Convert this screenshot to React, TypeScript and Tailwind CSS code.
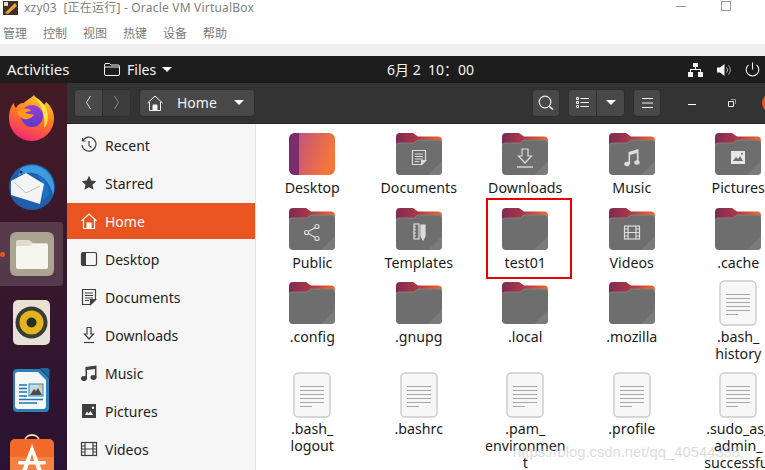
import React from "react";

const Folder = ({ children }: { children?: React.ReactNode }) => (
  <svg width="46" height="42" viewBox="0 0 46 42">
    <defs>
      <linearGradient id="folderBack" x1="0" y1="0" x2="1" y2="0">
        <stop offset="0" stopColor="#7f2a55" />
        <stop offset="0.5" stopColor="#b03a45" />
        <stop offset="1" stopColor="#f2682a" />
      </linearGradient>
    </defs>
    <path d="M0 4a4 4 0 0 1 4-4h13l5 3.500h20a4 4 0 0 1 4 4V20H0z" fill="url(#folderBack)" />
    <path d="M0 13a3 3 0 0 1 3-3h15l4-3h21a3 3 0 0 1 3 3v28a4 4 0 0 1-4 4H4a4 4 0 0 1-4-4z" fill="#6e6e6e" />
    <path d="M46 28v10a4 4 0 0 1-4 4H32z" fill="#7b7b7b" />
    <path d="M0 13a3 3 0 0 1 3-3h15l4-3h21a3 3 0 0 1 3 3" fill="none" stroke="#8d8d8d" strokeWidth="0.7" />
    {children}
  </svg>
);

const glyph = { fill: "none", stroke: "#dcdcdc", strokeWidth: 1.2 };

const GlyphDoc = () => (
  <g {...glyph}>
    <path d="M16.500 17.500h13v10l-4 4h-9z" />
    <path d="M19 21h8M19 23.500h8M19 26h8M19 28.500h4" />
    <path d="M29.500 27.500l-4 4v-4z" fill="#dcdcdc" />
  </g>
);
const GlyphDownload = () => (
  <g {...glyph}>
    <path d="M20 16h6v7h3.500L23 30l-6.500-7H20z" />
    <path d="M15 34h16" strokeWidth="1.400" />
  </g>
);
const GlyphMusic = () => (
  <g fill="#dcdcdc" stroke="none">
    <ellipse cx="18" cy="31" rx="2.700" ry="2.200" />
    <ellipse cx="28" cy="29.500" rx="2.700" ry="2.200" />
    <path d="M19.500 31V19l10-3v13.500h-1.600V20l-6.800 2v9z" />
  </g>
);
const GlyphPicture = () => (
  <g>
    <rect x="16" y="18" width="14" height="13" fill="#e6e6e6" />
    <path d="M18 28l3-4 2 2 2-3 3 5z" fill="#6e6e6e" />
    <circle cx="27" cy="20.800" r="1" fill="#6e6e6e" />
  </g>
);
const GlyphShare = () => (
  <g {...glyph}>
    <circle cx="17.500" cy="24.500" r="2" />
    <circle cx="28" cy="18.500" r="2" />
    <circle cx="28" cy="30.500" r="2" />
    <path d="M19.300 23.500l7-4M19.300 25.500l7 4" />
  </g>
);
const GlyphTemplates = () => (
  <g {...glyph}>
    <rect x="18" y="16" width="5" height="15" />
    <path d="M18 19h2M18 22h2M18 25h2M18 28h2" />
    <path d="M25 17h4v11l-2 4-2-4z" fill="#dcdcdc" />
  </g>
);
const GlyphVideo = () => (
  <g {...glyph}>
    <rect x="15.500" y="18" width="15" height="13" />
    <path d="M19 18v13M27 18v13M19 24.500h8M15.500 21h3.500M15.500 24.500h3.500M15.500 28h3.500M27 21h3.500M27 24.500h3.500M27 28h3.500" />
  </g>
);

const DesktopFolder = () => (
  <svg width="46" height="42" viewBox="0 0 46 42">
    <defs>
      <linearGradient id="desk" x1="0" y1="0" x2="1" y2="0.300">
        <stop offset="0" stopColor="#b84a8c" />
        <stop offset="1" stopColor="#f5763a" />
      </linearGradient>
    </defs>
    <rect width="46" height="42" rx="6" fill="url(#desk)" />
    <path d="M6 0h4v42H6a6 6 0 0 1-6-6V6a6 6 0 0 1 6-6z" fill="#7b2c6c" />
  </svg>
);

const FileDoc = () => (
  <svg width="38" height="46" viewBox="0 0 38 46">
    <rect x="1" y="1" width="36" height="44" rx="4.500" fill="#f7f7f7" stroke="#cbcbcb" strokeWidth="1.400" />
    <path d="M7 14.500h24M7 18.500h24M7 22.500h24M7 26.500h24M7 30.500h24M7 34.500h12" stroke="#a8a8a8" strokeWidth="1" />
  </svg>
);

type Item = { name: string; icon: React.ReactNode; boxed?: boolean };

const items: Item[] = [
  { name: "Desktop", icon: <DesktopFolder /> },
  { name: "Documents", icon: <Folder><GlyphDoc /></Folder> },
  { name: "Downloads", icon: <Folder><GlyphDownload /></Folder> },
  { name: "Music", icon: <Folder><GlyphMusic /></Folder> },
  { name: "Pictures", icon: <Folder><GlyphPicture /></Folder> },
  { name: "Public", icon: <Folder><GlyphShare /></Folder> },
  { name: "Templates", icon: <Folder><GlyphTemplates /></Folder> },
  { name: "test01", icon: <Folder />, boxed: true },
  { name: "Videos", icon: <Folder><GlyphVideo /></Folder> },
  { name: ".cache", icon: <Folder /> },
  { name: ".config", icon: <Folder /> },
  { name: ".gnupg", icon: <Folder /> },
  { name: ".local", icon: <Folder /> },
  { name: ".mozilla", icon: <Folder /> },
  { name: ".bash_\nhistory", icon: <FileDoc /> },
  { name: ".bash_\nlogout", icon: <FileDoc /> },
  { name: ".bashrc", icon: <FileDoc /> },
  { name: ".pam_\nenvironmen\nt", icon: <FileDoc /> },
  { name: ".profile", icon: <FileDoc /> },
  { name: ".sudo_as_\nadmin_\nsuccessful", icon: <FileDoc /> },
];

const side = { width: 18, height: 18, viewBox: "0 0 18 18", fill: "none", stroke: "currentColor", strokeWidth: 1.200 };

const places: { name: string; icon: React.ReactNode; active?: boolean }[] = [
  {
    name: "Recent",
    icon: (
      <svg {...side}>
        <path d="M3 4.500A7 7 0 1 1 2 9" />
        <path d="M2.500 2v3h3" />
        <path d="M9 5v4.500l2.500 2" />
      </svg>
    ),
  },
  {
    name: "Starred",
    icon: (
      <svg {...side} fill="currentColor" stroke="none">
        <path d="M9 1.800l2.200 4.800 5.100.6-3.800 3.500 1 5.100L9 13.300l-4.500 2.500 1-5.100L1.700 7.200l5.100-.6z" />
      </svg>
    ),
  },
  {
    name: "Home",
    active: true,
    icon: (
      <svg {...side}>
        <path d="M1.500 9L9 2l7.500 7" />
        <path d="M3.500 8v8.500h11V8" />
        <path d="M7 16.500V11h4v5.500" fill="currentColor" />
      </svg>
    ),
  },
  {
    name: "Desktop",
    icon: (
      <svg {...side}>
        <rect x="1.500" y="2.500" width="15" height="13" rx="1.500" />
        <path d="M2 3h4v12H2z" fill="currentColor" stroke="none" />
      </svg>
    ),
  },
  {
    name: "Documents",
    icon: (
      <svg {...side}>
        <path d="M2.500 1.500h13v10l-5 5h-8z" />
        <path d="M5 5h8M5 7.500h8M5 10h8M5 12.500h4" />
        <path d="M15.500 11.500l-5 5v-5z" fill="currentColor" />
      </svg>
    ),
  },
  {
    name: "Downloads",
    icon: (
      <svg {...side}>
        <path d="M7 1.500h4V8h2.500L9 13 4.500 8H7z" />
        <path d="M4 16.500h10" />
      </svg>
    ),
  },
  {
    name: "Music",
    icon: (
      <svg {...side} fill="currentColor" stroke="none">
        <ellipse cx="4" cy="14.500" rx="3" ry="2.400" />
        <ellipse cx="13.500" cy="13.500" rx="3" ry="2.400" />
        <path d="M5.500 14.500V3l11-1.500v12H15V5L7 6v8.500z" />
      </svg>
    ),
  },
  {
    name: "Pictures",
    icon: (
      <svg {...side} stroke="none" fill="currentColor">
        <path d="M2 2h14v14H2zm3 11h8l-2.500-4-2 2.500L7 9.500zM13 4.500a1.200 1.200 0 1 0 0 2.400 1.200 1.200 0 0 0 0-2.400z" fillRule="evenodd" />
      </svg>
    ),
  },
  {
    name: "Videos",
    icon: (
      <svg {...side}>
        <rect x="1.500" y="2.500" width="15" height="13" />
        <path d="M5 2.500v13M13 2.500v13M5 9h8M1.500 6H5M1.500 9H5M1.500 12H5M13 6h3.500M13 9h3.500M13 12h3.500" />
      </svg>
    ),
  },
];

const Firefox = () => (
  <svg width="46" height="46" viewBox="0 0 46 46">
    <defs>
      <linearGradient id="ffBody" x1="0.700" y1="0" x2="0.300" y2="1">
        <stop offset="0" stopColor="#ffd22e" />
        <stop offset="0.450" stopColor="#ff7a1f" />
        <stop offset="1" stopColor="#f0257a" />
      </linearGradient>
      <linearGradient id="ffGlobe" x1="0.500" y1="0" x2="0.500" y2="1">
        <stop offset="0" stopColor="#9a3fd8" />
        <stop offset="1" stopColor="#5b38c8" />
      </linearGradient>
    </defs>
    <path d="M25 0c3 5 7 6 10 10 1-1 2-3 2-3 5 4 8 10 8 16a22.500 22.500 0 0 1-45 1c0-6 1-12 5-16 0 3 1 4 2 5 2-4 5-5 8-5 1-2 6-4 10-8z" fill="url(#ffBody)" />
    <path d="M26 2c6 3 13 10 13 20 0 5-2 9-4 11 2-11-2-22-9-31z" fill="#ffe14a" />
    <circle cx="23" cy="21" r="11" fill="url(#ffGlobe)" />
    <path d="M8 17c5-5 13-4 14-1-3 0-5 1-6 2 4 1 7 2 9 1-1 4-8 7-12 4-2-1-4-3-5-6z" fill="#ff9a1f" />
  </svg>
);

const Thunderbird = () => (
  <svg width="48" height="48" viewBox="0 0 48 48">
    <circle cx="24" cy="25" r="23" fill="#1f5fae" />
    <path d="M12 7c8-6 22-5 30 6 4 6 5 14 3 20-2-10-9-20-20-22-5-1-10 0-15 3z" fill="#3f9be0" />
    <path d="M30 14c6 3 11 9 11 18l-7 7c2-9 1-18-4-25z" fill="#1e74c4" />
    <path d="M3 19l15-8 18 11-4 20-29-9z" fill="#f4f4f4" />
    <path d="M6 20l12 11 14-7" fill="none" stroke="#bdbdbd" strokeWidth="1" />
    <circle cx="13" cy="10" r="1.500" fill="#16304f" />
  </svg>
);

const FilesApp = () => (
  <svg width="44" height="44" viewBox="0 0 44 44">
    <rect width="44" height="44" rx="6" fill="#aaa490" />
    <path d="M6 10a2 2 0 0 1 2-2h11l4 3h13a2 2 0 0 1 2 2v4H6z" fill="#dedbce" />
    <path d="M6 17a3 3 0 0 1 3-3h10l3-2h14a2 2 0 0 1 2 2v21a2 2 0 0 1-2 2H8a2 2 0 0 1-2-2z" fill="#f6f5ef" />
  </svg>
);

const Rhythmbox = () => (
  <svg width="37" height="45" viewBox="0 0 37 45">
    <rect width="37" height="45" rx="5" fill="#e6e2d6" />
    <circle cx="18.500" cy="22.500" r="16" fill="#3a3a38" />
    <circle cx="18.500" cy="22.500" r="12" fill="#e2b51c" />
    <circle cx="18.500" cy="22.500" r="5" fill="#2a2a28" />
  </svg>
);

const Writer = () => (
  <svg width="37" height="45" viewBox="0 0 37 45">
    <path d="M4 1h23l9 9v30a4 4 0 0 1-4 4H4a4 4 0 0 1-4-4V5a4 4 0 0 1 4-4z" fill="#2a81b8" />
    <path d="M5 4h20l8 8v26a3 3 0 0 1-3 3H5a3 3 0 0 1-3-3V7a3 3 0 0 1 3-3z" fill="#f4f6f8" />
    <path d="M27 0h7a2.500 2.500 0 0 1 2.500 2.500V10z" fill="#1b6a9e" />
    <rect x="16" y="16" width="14" height="12" fill="#c9d9e6" stroke="#2a81b8" />
    <path d="M17 27l4-6 2 2 2-3 4 7z" fill="#4d4a48" />
    <circle cx="27.500" cy="18" r="1.500" fill="#f3c31c" />
    <path d="M6 17h8M6 20.500h8M6 24h8M6 28h8M6 31.500h24M6 35h18" stroke="#1b76b0" strokeWidth="1.700" />
  </svg>
);

const SoftwareApp = () => (
  <svg width="44" height="50" viewBox="0 0 44 50">
    <path d="M15 8c0-8 14-8 14 0" fill="none" stroke="#f5d6a6" strokeWidth="1.800" />
    <rect y="6" width="44" height="44" rx="5" fill="#f36a2a" />
    <rect y="24" width="44" height="26" rx="0" fill="#f58245" />
    <path d="M22 11l-12 32h5l7-22 7 22h5z" fill="#fff" />
    <rect x="8" y="28" width="28" height="3.500" rx="1.700" fill="#fff" />
  </svg>
);

const dock: { icon: React.ReactNode; active?: boolean }[] = [
  { icon: <Firefox /> },
  { icon: <Thunderbird /> },
  { icon: <FilesApp />, active: true },
  { icon: <Rhythmbox /> },
  { icon: <Writer /> },
  { icon: <SoftwareApp /> },
];

const Btn = ({ className, children }: { className: string; children: React.ReactNode }) => (
  <div className={`flex items-center justify-center h-[28px] bg-[#484848] border border-[#2e2e2e] rounded-[4px] shrink-0 ${className}`}>
    {children}
  </div>
);

const Caret = ({ className }: { className: string }) => (
  <span className={`w-0 h-0 border-x-[5px] border-x-transparent border-t-[5px] border-t-white ${className}`} />
);

export default function App() {
  return (
    <div className="w-[765px] h-[470px] overflow-hidden flex flex-col relative bg-white font-['Noto_Sans','Noto_Sans_CJK_SC',sans-serif]">
      {/* host window chrome */}
      <div className="h-[44px] shrink-0 bg-white text-[#808080]">
        <div className="h-[15px] flex items-center">
          <svg width="15" height="14" viewBox="0 0 15 14" className="ml-[3px]">
            <rect width="15" height="14" fill="#3a3026" />
            <path d="M2 12L12 2l2 3-9 8z" fill="#f0a23c" />
            <rect x="1" y="1" width="4" height="4" fill="#e8d8c0" />
          </svg>
          <span className="ml-[6px] text-[12px] leading-[15px] tracking-[0.2px] whitespace-pre">xzy03  [正在运行] - Oracle VM VirtualBox</span>
          <span className="ml-auto w-[10px] h-px bg-[#9a9a9a] mb-[3px]" />
          <span className="ml-[35px] mr-[34px] w-[10px] h-[10px] border border-[#9a9a9a] mb-[4px]" />
        </div>
        <div className="flex gap-4 mt-[10px] pl-[3px] text-[12px] leading-[17px] text-[#7a7a7a]">
          {["管理", "控制", "视图", "热键", "设备", "帮助"].map((m) => (
            <span key={m}>{m}</span>
          ))}
        </div>
      </div>
      <div className="h-[12px] shrink-0 bg-[#eeeeee]" />

      {/* gnome top bar */}
      <div className="h-[27px] shrink-0 bg-[#1d1d1d] text-[#f2f2f2] flex items-center text-[14px] pl-[7px]">
        <span className="w-[97px] text-[15px]">Activities</span>
        <div className="w-[283px] flex items-center">
          <svg width="16" height="13" viewBox="0 0 16 13" fill="none" stroke="#f2f2f2" strokeWidth="1">
            <path d="M.500 2a1.500 1.500 0 0 1 1.500-1.500h3.500L7 2h7a1.500 1.500 0 0 1 1.500 1.500V11a1.500 1.500 0 0 1-1.500 1.500H2A1.500 1.500 0 0 1 .500 11z" />
            <path d="M.500 4h15" />
          </svg>
          <span className="ml-[7px]">Files</span>
          <Caret className="ml-[6px]" />
        </div>
        <span className="whitespace-pre text-[14px]">6月 2  10：00</span>
        <div className="ml-auto flex items-center pr-[5px]">
          <svg width="15" height="14" viewBox="0 0 15 14" fill="#f2f2f2">
            <rect x="5" y="0" width="5" height="4" />
            <rect x="0" y="9" width="5" height="5" />
            <rect x="10" y="9" width="5" height="5" />
            <path d="M7 4h1v2h5v3h-1V7H3v2H2V6h5z" />
          </svg>
          <svg width="15" height="14" viewBox="0 0 15 14" className="ml-[14px]" fill="#f2f2f2">
            <path d="M0 4.500h3L7.500 1v12L3 9.500H0z" />
            <path d="M9.500 4.500a3.500 3.500 0 0 1 0 5M11.500 2.500a6.500 6.500 0 0 1 0 9" fill="none" stroke="#a8a8a8" />
          </svg>
          <svg width="15" height="15" viewBox="0 0 15 15" className="ml-[13px]" fill="none" stroke="#f2f2f2" strokeWidth="1.100">
            <path d="M7.500 .500v7" />
            <path d="M3.500 2.800a6.300 6.300 0 1 0 8 0" />
          </svg>
        </div>
      </div>

      <div className="flex flex-1 min-h-0">
        {/* ubuntu dock */}
        <div className="w-[67px] shrink-0 bg-gradient-to-b from-[#431b25] to-[#2b1233] flex flex-col pt-[1px]">
          {dock.map((d, i) => (
            <div key={i} className="h-[68px] shrink-0 flex items-center relative">
              <div className={`w-[63px] h-[64px] flex items-center justify-center rounded-r-[4px] ${d.active ? "bg-white/15" : ""}`}>
                {d.icon}
              </div>
              {d.active && <span className="absolute left-0 w-[5px] h-[5px] rounded-full bg-[#e95420]" />}
            </div>
          ))}
        </div>

        <div className="flex-1 min-w-0 flex flex-col">
          {/* header bar */}
          <div className="h-[41px] shrink-0 bg-[#333333] border-b border-[#232323] flex items-center pl-[7px] pb-[1px]">
            <div className="flex h-[28px] w-[57px] shrink-0 rounded-[4px] border border-[#2e2e2e] bg-[#484848]">
              <div className="flex-1 flex items-center justify-center border-r border-[#2e2e2e]">
                <svg width="7" height="15" viewBox="0 0 7 15" fill="none" stroke="#dcdcdc"><path d="M5.500 1L1.500 7.500l4 6.500" /></svg>
              </div>
              <div className="flex-1 flex items-center justify-center bg-[#3c3c3c] rounded-r-[4px]">
                <svg width="7" height="15" viewBox="0 0 7 15" fill="none" stroke="#8a8a8a"><path d="M1.500 1l4 6.500-4 6.500" /></svg>
              </div>
            </div>
            <Btn className="ml-[8px] w-[116px] text-[#f2f2f2] text-[14px] !justify-start pl-[7px]">
              <svg width="16" height="16" viewBox="0 0 16 16" fill="none" stroke="#f2f2f2">
                <path d="M.500 8L8 1l7.500 7" />
                <path d="M2.500 7v8.500h11V7" />
                <path d="M6 15.500V10h4v5.500" fill="#f2f2f2" />
              </svg>
              <span className="ml-[14px]">Home</span>
              <Caret className="ml-[17px]" />
            </Btn>
            <Btn className="ml-[277px] w-[28px]">
              <svg width="16" height="16" viewBox="0 0 16 16" fill="none" stroke="#e8e8e8" strokeWidth="1.200">
                <circle cx="7" cy="7" r="5.800" />
                <path d="M11.300 11.300l3.700 3.200" strokeWidth="1.600" />
              </svg>
            </Btn>
            <div className="ml-[8px] flex h-[28px] w-[57px] shrink-0 rounded-[4px] border border-[#2e2e2e] bg-[#484848]">
              <div className="flex-1 flex items-center justify-center border-r border-[#2e2e2e]">
                <svg width="13" height="11" viewBox="0 0 13 11" fill="none" stroke="#f2f2f2">
                  <path d="M.500.500h2v2h-2zM.500 4.500h2v2h-2zM.500 8.500h2v2h-2zM4.500 1.500H13M4.500 5.500H13M4.500 9.500H13" />
                </svg>
              </div>
              <div className="flex-1 flex items-center justify-center">
                <Caret className="" />
              </div>
            </div>
            <Btn className="ml-[8px] w-[28px]">
              <svg width="11" height="10" viewBox="0 0 11 10" stroke="#f2f2f2"><path d="M0 .500h11M0 5h11M0 9.500h11" /></svg>
            </Btn>
            <div className="ml-[11px] w-[40px] shrink-0 flex justify-center">
              <span className="w-[8px] h-px bg-white mt-[3px]" />
            </div>
            <div className="w-[40px] shrink-0 flex justify-center">
              <svg width="8" height="8" viewBox="0 0 8 8" fill="none" stroke="#f2f2f2">
                <path d="M.500 2.500h5v5h-5z" />
                <path d="M3 .500h4.500V5" stroke="#9a9a9a" />
              </svg>
            </div>
            <div className="w-[40px] shrink-0 flex justify-center">
              <span className="w-[20px] h-[20px] rounded-full bg-[#e95420]" />
            </div>
          </div>

          <div className="flex flex-1 min-h-0">
            {/* places sidebar */}
            <div className="w-[189px] shrink-0 bg-[#f6f6f6] border-r border-[#e4e4e4] pt-[3px] flex flex-col gap-[2px] text-[14px]">
              {places.map((p) => (
                <div
                  key={p.name}
                  className={`h-[36px] shrink-0 flex items-center pl-[13px] ${p.active ? "bg-[#e95420] text-white" : "text-[#222222]"}`}
                >
                  <span className={`flex w-[18px] ${p.active ? "text-white" : "text-[#3f3f3f]"}`}>{p.icon}</span>
                  <span className="ml-[7px]">{p.name}</span>
                </div>
              ))}
            </div>

            {/* icon grid */}
            <div className="flex-1 min-w-0 bg-white pt-[7px] pl-[3px]">
              <div className="grid grid-cols-[repeat(5,106.500px)] items-start">
                {items.map((it) => (
                  <div key={it.name} className="relative flex flex-col items-center pb-[9.500px]">
                    {it.boxed && <div className="absolute left-[14px] top-[-7.500px] w-[86px] h-[81px] border-2 border-[#e60000]" />}
                    <div className="h-[46px] flex items-center justify-center">{it.icon}</div>
                    <div className="mt-[2px] text-[14.200px] leading-[17px] text-[#1a1a1a] text-center whitespace-pre-line">
                      {it.name}
                    </div>
                  </div>
                ))}
              </div>
            </div>
          </div>
        </div>
      </div>

      {/* csdn watermark */}
      <div className="absolute left-[513px] top-[442px] text-[14.800px] leading-[20px] whitespace-nowrap text-[#c4c4c4]/60 font-['Liberation_Sans',sans-serif]">
        https://blog.csdn.net/qq_40544338
      </div>
    </div>
  );
}
